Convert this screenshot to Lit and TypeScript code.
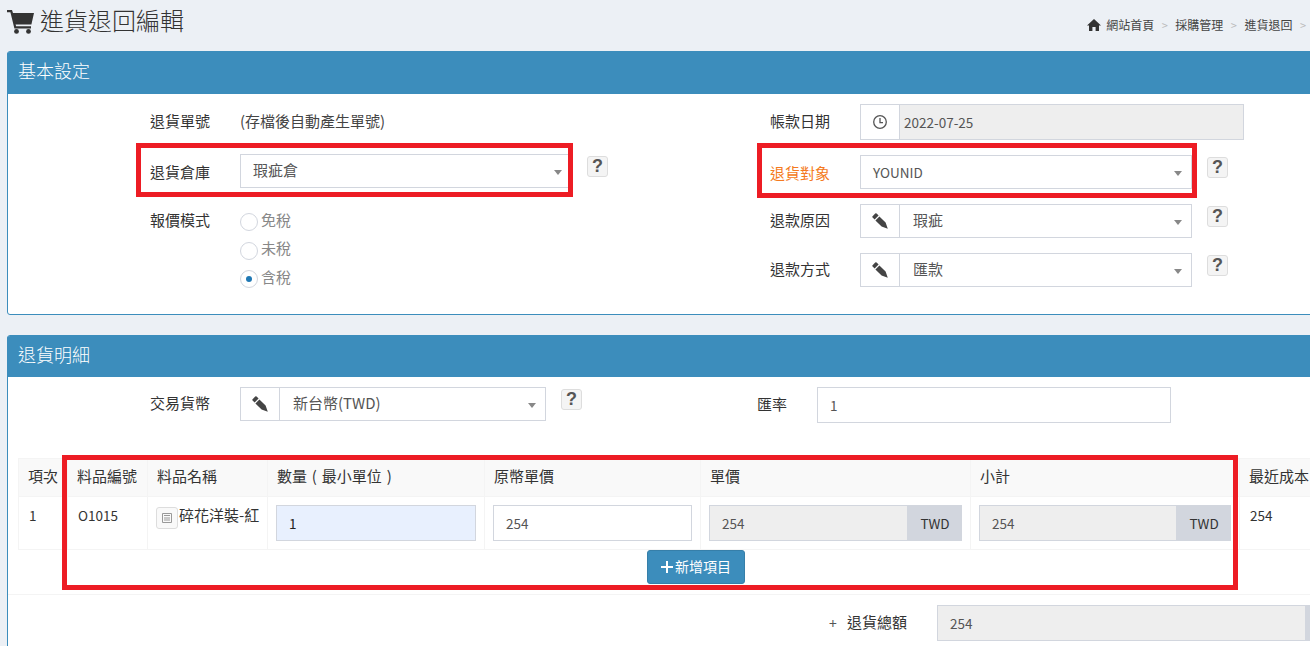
import { LitElement, html, css } from "lit";
import { customElement } from "lit/decorators.js";

const pencil = html`<svg class="ico" viewBox="0 0 16 16" width="16" height="16"><path d="M.6 3.2 3.2.6q.7-.7 1.4 0L6.6 2.6 2.6 6.6.6 4.6q-.7-.7 0-1.4zM3.4 7.4 7.4 3.4l6.2 6.2L15.8 15.8 9.6 13.6z" fill="#444"/></svg>`;
const clock = html`<svg class="ico" viewBox="0 0 16 16" width="16" height="16"><circle cx="8" cy="8" r="6.3" fill="none" stroke="#555" stroke-width="1.3"/><path d="M8 4v4.6h3" fill="none" stroke="#555" stroke-width="1.3"/></svg>`;
const arrow = html`<span class="arrow"></span>`;

@customElement("app-root")
export class AppRoot extends LitElement {
  static styles = css`
    :host {
      display: block; position: relative; width: 1310px; height: 646px; overflow: hidden;
      background: #ecf0f5; color: #333;
      font-family: "Noto Sans CJK TC", "Noto Sans", sans-serif; font-size: 15px;
    }
    * { box-sizing: border-box; }
    .lat { font-size: 13.5px; }
    .top { height: 51px; display: flex; justify-content: space-between; padding-left: 7px; }
    h1 { margin: 0; height: 44px; display: flex; align-items: center; gap: 6px; font-size: 24px; font-weight: 300; line-height: 1; }
    h1 span { padding-bottom: 4px; }
    .crumb { display: flex; align-items: center; height: 51px; font-size: 12px; color: #444; padding: 0 4px 2px 0; }
    .crumb svg { margin-right: 5px; }
    .crumb i { font-style: normal; color: #bbb; margin: 0 7.5px; font-size: 11px; }
    .crumb i:last-child { margin-right: 0; }
    .panel { margin-left: 7px; margin-right: -20px; background: #fff; border: 1px solid #3c8dbc; border-radius: 3px; }
    .panel + .panel { margin-top: 20px; height: 400px; }
    .head { background: #3c8dbc; color: #fff; font-size: 18px; height: 42px; margin: 0 -1px; padding: 0 0 6px 11px; display: flex; align-items: center; border-radius: 3px 3px 0 0; font-weight: 300; }
    .panel + .panel .head { height: 41px; }
    .form { display: flex; padding-top: 10px; height: 220px; }
    .col { width: 620px; padding-left: 142px; display: flex; flex-direction: column; gap: 15px; }
    .row { display: flex; align-items: center; }
    .lbl { width: 90px; flex: none; color: #333; padding-bottom: 3px; }
    .lbl.keep { padding-bottom: 0; }
    .h35 { height: 35px; }
    .radio-row { align-items: flex-start; padding-top: 6px; }
    .orange { color: #f47a20; }
    .note { color: #444; padding-bottom: 3px; }
    .ctl { display: flex; align-items: center; height: 34px; border: 1px solid #d2d6de; background: #fff; color: #555; position: relative; }
    .w332 { width: 332px; }
    .w306 { width: 306px; }
    .w384 { width: 384px; height: 36px; }
    .w354 { width: 354px; height: 36px; }
    .sel { padding-left: 12px; }
    .sel .txt, .val { padding-bottom: 3px; }
    .add { width: 39px; height: 100%; flex: none; border-right: 1px solid #d2d6de; display: flex; align-items: center; justify-content: center; }
    .add + .val { padding-left: 13px; }
    .w384 .val { flex: 1; height: 100%; background: #eee; display: flex; align-items: center; padding: 0 0 0 4px; }
    .arrow { position: absolute; right: 9px; top: 15px; border: 4px solid transparent; border-top: 5px solid #888; border-bottom: 0; }
    .help {
      width: 21px; height: 21px; margin-left: 15px; align-self: flex-start; margin-top: 2px; border: 1px solid #ddd; border-radius: 3px; background: #f4f4f4;
      display: flex; align-items: center; justify-content: center; font: 700 18px "Liberation Sans", sans-serif; color: #555;
    }
    .radios { display: flex; flex-direction: column; gap: 8.5px; color: #888; margin-top: 1px; }
    .radio { display: flex; align-items: center; gap: 3px; height: 20px; }
    .radio b { font-weight: 400; padding-bottom: 2px; }
    .circle { width: 18px; height: 18px; border: 1px solid #d2d6de; border-radius: 50%; background: #fff; margin-top: 4px; display: flex; align-items: center; justify-content: center; }
    .circle.on::after { content: ""; width: 6px; height: 6px; border-radius: 50%; background: #1f78b4; }
    .form2 { display: flex; padding-top: 10px; height: 81px; }
    .rate { padding-left: 129px; }
    .rate .lbl { width: 60px; }
    table { margin-left: 10px; border-collapse: collapse; table-layout: fixed; width: 1330px; }
    th, td { border: 1px solid #f4f4f4; padding: 8px 10px; text-align: left; font-weight: 400; vertical-align: top; line-height: 21px; }
    th { background: #f9f9f9; padding: 6px 9px; height: 38px; word-spacing: 1.5px; white-space: nowrap; }
    td { height: 52px; color: #333; }
    td.tight { padding: 8px; }
    .c1 { width: 49px; } .c2 { width: 80px; } .c3 { width: 120px; } .c4 { width: 217px; } .c5 { width: 216px; } .c6 { width: 270px; } .c7 { width: 269px; }
    .name { display: flex; align-items: flex-start; white-space: nowrap; margin-left: -2px; gap: 1px; line-height: 19px; }
    .cal { width: 22px; height: 22px; flex: none; border: 1px solid #ddd; border-radius: 3px; background: #f9f9f9; display: flex; align-items: center; justify-content: center; margin-top: 2px; }
    .in { height: 36px; border: 1px solid #d2d6de; color: #555; display: flex; align-items: center; padding-left: 12px; background: #fff; width: 200px; }
    .in.w199 { width: 199px; }
    .in.focus { background: #e8f0fe; color: #222; }
    .in.off { background: #eee; }
    .grp { display: flex; }
    .tag { width: 54px; height: 36px; background: #d2d6de; display: flex; align-items: center; justify-content: center; color: #333; }
    .foot { padding-left: 639px; height: 45px; border-bottom: 1px solid #f4f4f4; }
    button {
      width: 98px; height: 34px; padding: 0 0 3px; border: 1px solid #367fa9; border-radius: 3px; background: #3c8dbc; color: #fff;
      font: 14px "Noto Sans CJK TC", sans-serif; display: flex; align-items: center; justify-content: center; gap: 2px;
    }
    button svg { margin-top: 3px; }
    .total { display: flex; align-items: center; padding: 10px 0 0 821px; }
    .total .plus { width: 18px; color: #555; font-size: 14px; }
    .total .lbl { width: 90px; }
    .total .in { width: 369px; }
    .total .tag { width: 20px; }
    .mark { position: absolute; border: 5px solid #ed1c24; pointer-events: none; }
    .m1 { left: 136px; top: 143px; width: 437px; height: 54px; }
    .m2 { left: 757px; top: 143px; width: 440px; height: 55px; }
    .m3 { left: 62px; top: 455px; width: 1176px; height: 135px; }
  `;

  render() {
    return html`
      <div class="top">
        <h1>
          <svg viewBox="0 0 27 24" width="27" height="24"><path d="M0 0h5l1 3h21l-2.6 11.4H8.6l.5 1.8H24v2.2H7.4L3.4 2.2H0z" fill="#333"/><circle cx="9.5" cy="21.4" r="2.4" fill="#333"/><circle cx="21.5" cy="21.4" r="2.4" fill="#333"/></svg>
          <span>進貨退回編輯</span>
        </h1>
        <div class="crumb">
          <svg viewBox="0 0 14 12" width="14" height="12"><path d="M7 0l7 6.4h-2V12H8.6V8H5.4v4H2V6.4H0z" fill="#333"/></svg>
          網站首頁<i>&gt;</i>採購管理<i>&gt;</i>進貨退回<i>&gt;</i>
        </div>
      </div>

      <section class="panel">
        <div class="head">基本設定</div>
        <div class="form">
          <div class="col">
            <div class="row h35"><span class="lbl">退貨單號</span><span class="note">(存檔後自動產生單號)</span></div>
            <div class="row"><span class="lbl keep">退貨倉庫</span><div class="ctl w332 sel"><span class="txt">瑕疵倉</span>${arrow}</div><span class="help">?</span></div>
            <div class="row radio-row"><span class="lbl">報價模式</span>
              <div class="radios">
                <div class="radio"><span class="circle"></span><b>免稅</b></div>
                <div class="radio"><span class="circle"></span><b>未稅</b></div>
                <div class="radio"><span class="circle on"></span><b>含稅</b></div>
              </div>
            </div>
          </div>
          <div class="col">
            <div class="row"><span class="lbl">帳款日期</span><div class="ctl w384"><span class="add">${clock}</span><span class="val lat">2022-07-25</span></div></div>
            <div class="row"><span class="lbl orange keep">退貨對象</span><div class="ctl w332 sel lat">YOUNID${arrow}</div><span class="help">?</span></div>
            <div class="row"><span class="lbl">退款原因</span><div class="ctl w332"><span class="add">${pencil}</span><span class="val">瑕疵</span>${arrow}</div><span class="help">?</span></div>
            <div class="row"><span class="lbl">退款方式</span><div class="ctl w332"><span class="add">${pencil}</span><span class="val">匯款</span>${arrow}</div><span class="help">?</span></div>
          </div>
        </div>
      </section>

      <section class="panel">
        <div class="head">退貨明細</div>
        <div class="form2">
          <div class="col">
            <div class="row"><span class="lbl">交易貨幣</span><div class="ctl w306"><span class="add">${pencil}</span><span class="val">新台幣(TWD)</span>${arrow}</div><span class="help">?</span></div>
          </div>
          <div class="col rate">
            <div class="row"><span class="lbl">匯率</span><div class="ctl w354 sel lat">1</div></div>
          </div>
        </div>
        <table>
          <colgroup><col class="c1"/><col class="c2"/><col class="c3"/><col class="c4"/><col class="c5"/><col class="c6"/><col class="c7"/><col/></colgroup>
          <thead><tr><th>項次</th><th>料品編號</th><th>料品名稱</th><th>數量 ( 最小單位 )</th><th>原幣單價</th><th>單價</th><th>小計</th><th>最近成本</th></tr></thead>
          <tbody>
            <tr>
              <td class="lat">1</td><td class="lat">O1015</td>
              <td><div class="name"><span class="cal"><svg viewBox="0 0 12 12" width="12" height="12"><path d="M1.5 1.5h9v9h-9zM3 3.5h6M3 6h6M3 8h6" fill="none" stroke="#999"/></svg></span>碎花洋裝-紅</div></td>
              <td class="tight"><div class="in focus lat">1</div></td>
              <td class="tight"><div class="in w199 lat">254</div></td>
              <td class="tight"><div class="grp"><div class="in w199 off lat">254</div><div class="tag lat">TWD</div></div></td>
              <td class="tight"><div class="grp"><div class="in w199 off lat">254</div><div class="tag lat">TWD</div></div></td>
              <td class="lat">254</td>
            </tr>
          </tbody>
        </table>
        <div class="foot"><button><svg viewBox="0 0 12 12" width="12" height="12"><path d="M5 0h2v5h5v2H7v5H5V7H0V5h5z" fill="#fff"/></svg>新增項目</button></div>
        <div class="total"><span class="plus">+</span><span class="lbl">退貨總額</span><div class="grp"><div class="in off lat">254</div><div class="tag"></div></div></div>
      </section>

      <div class="mark m1"></div>
      <div class="mark m2"></div>
      <div class="mark m3"></div>
    `;
  }
}
